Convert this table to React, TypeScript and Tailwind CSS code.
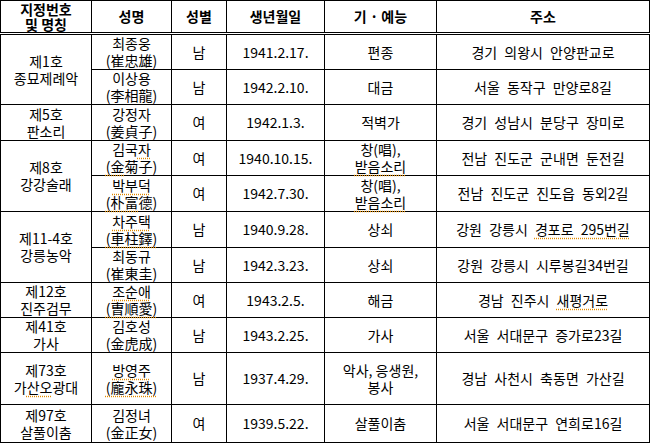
import React from "react";

const U = ({ children }: { children: React.ReactNode }) => (
  <span className="underline decoration-dotted decoration-[#e08a00] underline-offset-[3px]">{children}</span>
);

const td = "border border-black text-center align-middle p-0";

export default function App() {
  const rowH = [36, 35, 36, 35, 36, 36, 35, 34, 35, 52, 38];
  return (
    <div
      className="bg-white w-[650px] h-[443px] text-black text-[14px] leading-[17px]"
      style={{ fontFamily: '"Noto Sans CJK KR", "Noto Sans", sans-serif' }}
    >
      <table className="table-fixed border-collapse w-[649px]">
        <colgroup>
          <col className="w-[91px]" />
          <col className="w-[80px]" />
          <col className="w-[55px]" />
          <col className="w-[98px]" />
          <col className="w-[112px]" />
          <col className="w-[213px]" />
        </colgroup>
        <thead>
          <tr className="h-[33px] font-bold">
            <th className={`${td} border-b-[3px] border-double leading-[15px]`}>지정번호<br />및 명칭</th>
            <th className={`${td} border-b-[3px] border-double`}>성명</th>
            <th className={`${td} border-b-[3px] border-double`}>성별</th>
            <th className={`${td} border-b-[3px] border-double`}>생년월일</th>
            <th className={`${td} border-b-[3px] border-double`}>기 · 예능</th>
            <th className={`${td} border-b-[3px] border-double`}>주소</th>
          </tr>
        </thead>
        <tbody>
          <tr style={{ height: rowH[0] }}>
            <td rowSpan={2} className={td}>제1호<br />종묘제례악</td>
            <td className={td}>최종웅<br />(崔忠雄)</td>
            <td className={td}>남</td>
            <td className={td}>1941.2.17.</td>
            <td className={td}>편종</td>
            <td className={`${td} [word-spacing:4px]`}>경기 의왕시 안양판교로</td>
          </tr>
          <tr style={{ height: rowH[1] }}>
            <td className={td}>이상용<br />(李相龍)</td>
            <td className={td}>남</td>
            <td className={td}>1942.2.10.</td>
            <td className={td}>대금</td>
            <td className={`${td} [word-spacing:4px]`}>서울 동작구 만양로8길</td>
          </tr>
          <tr style={{ height: rowH[2] }}>
            <td className={td}>제5호<br />판소리</td>
            <td className={td}>강정자<br />(姜貞子)</td>
            <td className={td}>여</td>
            <td className={td}>1942.1.3.</td>
            <td className={td}>적벽가</td>
            <td className={`${td} [word-spacing:4px]`}>경기 성남시 분당구 장미로</td>
          </tr>
          <tr style={{ height: rowH[3] }}>
            <td rowSpan={2} className={td}>제8호<br />강강술래</td>
            <td className={td}>김국<U>자</U><br /><U>(金</U>菊子)</td>
            <td className={td}>여</td>
            <td className={td}>1940.10.15.</td>
            <td className={td}>창(唱),<br /><U>받음소리</U></td>
            <td className={`${td} [word-spacing:4px]`}>전남 진도군 군내면 둔전길</td>
          </tr>
          <tr style={{ height: rowH[4] }}>
            <td className={td}><U>박부덕</U><br /><U>(朴富</U>德)</td>
            <td className={td}>여</td>
            <td className={td}>1942.7.30.</td>
            <td className={td}>창(唱),<br /><U>받음소리</U></td>
            <td className={`${td} [word-spacing:4px]`}>전남 진도군 진도읍 동외2길</td>
          </tr>
          <tr style={{ height: rowH[5] }}>
            <td rowSpan={2} className={td}>제11-4호<br />강릉농악</td>
            <td className={td}><U>차주택</U><br /><U>(車柱鐸)</U></td>
            <td className={td}>남</td>
            <td className={td}>1940.9.28.</td>
            <td className={td}>상쇠</td>
            <td className={`${td} [word-spacing:4px]`}>강원 강릉시 <U>경포로 295번길</U></td>
          </tr>
          <tr style={{ height: rowH[6] }}>
            <td className={td}>최동규<br />(崔東圭)</td>
            <td className={td}>남</td>
            <td className={td}>1942.3.23.</td>
            <td className={td}>상쇠</td>
            <td className={`${td} [word-spacing:4px]`}>강원 강릉시 시루봉길34번길</td>
          </tr>
          <tr style={{ height: rowH[7] }}>
            <td className={td}>제12호<br />진주검무</td>
            <td className={td}><U>조순애</U><br /><U>(曺順愛)</U></td>
            <td className={td}>여</td>
            <td className={td}>1943.2.5.</td>
            <td className={td}>해금</td>
            <td className={`${td} [word-spacing:4px]`}>경남 진주시 <U>새평거로</U></td>
          </tr>
          <tr style={{ height: rowH[8] }}>
            <td className={td}>제41호<br />가사</td>
            <td className={td}>김호성<br />(金虎成)</td>
            <td className={td}>남</td>
            <td className={td}>1943.2.25.</td>
            <td className={td}>가사</td>
            <td className={`${td} [word-spacing:4px]`}>서울 서대문구 증가로23길</td>
          </tr>
          <tr style={{ height: rowH[9] }}>
            <td className={td}>제73호<br />가<U>산오</U>광대</td>
            <td className={td}><U>방영주</U><br /><U>(龐永珠)</U></td>
            <td className={td}>남</td>
            <td className={td}>1937.4.29.</td>
            <td className={td}>악사, 응생원,<br />봉사</td>
            <td className={`${td} [word-spacing:4px]`}>경남 사천시 축동면 가산길</td>
          </tr>
          <tr style={{ height: rowH[10] }}>
            <td className={td}>제97호<br />살풀이춤</td>
            <td className={td}>김정녀<br />(金正女)</td>
            <td className={td}>여</td>
            <td className={td}>1939.5.22.</td>
            <td className={td}>살풀이춤</td>
            <td className={`${td} [word-spacing:4px]`}>서울 서대문구 연희로16길</td>
          </tr>
        </tbody>
      </table>
    </div>
  );
}
